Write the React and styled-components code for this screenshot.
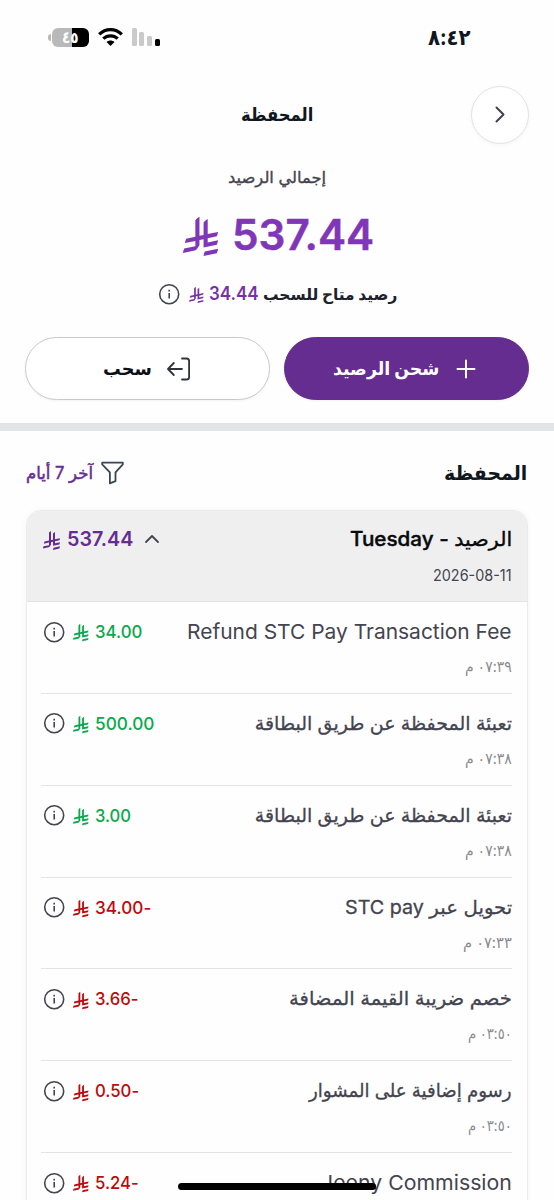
import React, { useLayoutEffect, useRef, useState } from 'react';
import styled, { createGlobalStyle } from 'styled-components';

const GlobalStyle = createGlobalStyle`
    * {
        box-sizing: border-box;
    }
    body {
        margin: 0;
        background: #fefefe;
        font-family: Inter, 'DejaVu Sans', sans-serif;
    }
`

const Screen = styled.div`
    direction: rtl;
    position: relative;
    width: 554px;
    height: 1200px;
    overflow: hidden;
    background: #fefefe;
    color: #101720;
`

const FitBox = styled.span`
    display: block;
    flex: none;
    width: ${p => p.$width}px;
    height: ${p => p.$line || 24}px;
    line-height: ${p => p.$line || 24}px;
    font-size: ${p => p.$size}px;
    font-weight: ${p => p.$weight || 400};
    color: ${p => p.$color || 'inherit'};
    margin-top: ${p => p.$drop || 0}px;
    white-space: nowrap;
`

const FitInner = styled.span`
    display: inline-block;
    transform-origin: 100% 50%;
    -webkit-text-stroke: ${p => p.$stroke || 0}px currentColor;
`

// keeps a label at a fixed width whatever font ends up being used
const Fit = ({ children, width, size, weight, color, line, drop, stroke }) => {
    const ref = useRef(null)
    const [scale, setScale] = useState(1)
    useLayoutEffect(() => {
        setScale(width / ref.current.offsetWidth)
    }, [width])
    return (
        <FitBox $width={width} $size={size} $weight={weight} $color={color} $line={line} $drop={drop}>
            <FitInner ref={ref} $stroke={stroke} style={{ transform: `scaleX(${scale})` }}>{children}</FitInner>
        </FitBox>
    )
}

const Svg = styled.svg`
    display: block;
    flex: none;
    overflow: visible;
`

const Riyal = ({ width, color, drop = 0 }) => (
    <Svg width={width} height={width * 1.118} viewBox={`0 ${-drop * 60} 1124.14 1256.39`} fill={color}>
        <path d="M699.62,1113.02c-20.06,44.48-33.32,92.75-38.4,143.37l424.51-90.24c20.06-44.47,33.31-92.75,38.4-143.37l-424.51,90.24Z" />
        <path d="M1085.73,895.8c20.06-44.47,33.32-92.75,38.4-143.37l-330.68,70.33v-135.2l292.27-62.11c20.06-44.47,33.32-92.75,38.4-143.37l-330.68,70.27V66.13c-50.67,28.45-95.67,66.32-132.25,110.99v403.35l-132.25,28.11V0c-50.67,28.44-95.67,66.32-132.25,110.99v525.69l-295.91,62.88c-20.06,44.47-33.33,92.75-38.42,143.37l334.33-71.05v170.26l-358.3,76.14c-20.06,44.47-33.32,92.75-38.4,143.37l375.04-79.7c30.53-6.35,56.77-24.4,73.83-49.24l68.78-101.97v-.02c7.14-10.55,11.3-23.27,11.3-36.97v-149.98l132.25-28.11v270.4l424.53-90.28Z" />
    </Svg>
)

const Info = () => (
    <Svg width="21" height="21" viewBox="0 0 21 21" fill="none" stroke="#43444f" strokeWidth="1.6">
        <circle cx="10.2" cy="10.2" r="9.5" />
        <path d="M10.2 9v5.4" />
        <path d="M10.2 5.8v1.7" />
    </Svg>
)

const StatusBar = styled.div`
    display: flex;
    justify-content: space-between;
    align-items: center;
    height: 74px;
    padding: 0 83px 0 48px;
`

const StatusIcons = styled.div`
    display: flex;
    align-items: center;
`

const Signal = styled.div`
    direction: ltr;
    display: flex;
    align-items: flex-end;
    gap: 2.7px;
    height: 18px;
`

const Bar = styled.i`
    width: 5px;
    height: ${p => p.$height}px;
    border-radius: 1.5px;
    background: ${p => p.$on ? '#000' : '#cacaca'};
`

const WifiBox = styled.div`
    margin: 0 9px;
`

const BatteryBox = styled.div`
    direction: ltr;
    display: flex;
    align-items: center;
    gap: 1px;
`

const BatteryCap = styled.i`
    width: 2.5px;
    height: 7px;
    border-radius: 3px 0 0 3px;
    background: #b9b9b9;
`

const Battery = styled.div`
    direction: rtl;
    display: flex;
    justify-content: center;
    width: 37px;
    height: 19px;
    border-radius: 6px;
    background: linear-gradient(to left, #000 17px, #b9b9b9 17px);
`

const Header = styled.header`
    display: grid;
    grid-template-columns: 58px 1fr 58px;
    align-items: center;
    justify-items: center;
    height: 81px;
    padding: 0 25px;
`

const RoundButton = styled.button`
    display: flex;
    align-items: center;
    justify-content: center;
    width: 58px;
    height: 58px;
    padding: 0;
    border: 1.5px solid #e3e3e5;
    border-radius: 50%;
    background: #fff;
    box-shadow: 0 1px 5px rgba(0, 0, 0, .04);
`

const Summary = styled.section`
    display: flex;
    flex-direction: column;
    align-items: center;
    height: 182px;
    padding-top: 10px;
`

const TotalRow = styled.div`
    display: flex;
    align-items: center;
    gap: 15px;
    height: 52px;
    margin-top: 20px;
    padding-left: 3px;
`

const AvailableRow = styled.div`
    display: flex;
    align-items: center;
    gap: 5px;
    height: 28px;
    margin-top: 19px;
    padding-left: 2px;
`

const InfoSlot = styled.span`
    margin-right: ${p => p.$gap}px;
`

const Actions = styled.div`
    display: grid;
    grid-template-columns: 1fr 1fr;
    gap: 14px;
    height: 86px;
    padding: 0 25px;
`

const Action = styled.button`
    display: flex;
    align-items: center;
    justify-content: center;
    gap: ${p => p.$gap}px;
    height: 63px;
    padding: 0 ${p => p.$shift}px 0 0;
    border: 1px solid ${p => p.$primary ? '#652d90' : '#c9c8d0'};
    border-radius: 32px;
    background: ${p => p.$primary ? '#652d90' : '#fff'};
    color: ${p => p.$primary ? '#fff' : '#0b0f16'};
    font-family: inherit;
    box-shadow: 0 1px 3px rgba(0, 0, 0, .05);
`

const Divider = styled.div`
    height: 8px;
    background: #e3e4e6;
`

const SectionHead = styled.div`
    display: flex;
    align-items: center;
    justify-content: space-between;
    height: 79px;
    padding: 5px 27px 0 26px;
`

const Filter = styled.div`
    display: flex;
    align-items: center;
    gap: 8px;
`

const Card = styled.section`
    width: 502px;
    height: 720px;
    margin-right: 26px;
    border: 1px solid #ebebed;
    border-radius: 15px 15px 0 0;
    background: #fefefe;
    box-shadow: 0 0 6px rgba(0, 0, 0, .04);
    overflow: hidden;
`

const CardHead = styled.div`
    display: flex;
    justify-content: space-between;
    height: 91px;
    padding: 15px 15px 0 16px;
    background: #efefef;
    border-bottom: 1px solid #e3e3e6;
`

const Balance = styled.div`
    display: flex;
    align-items: center;
    height: 26px;
`

const ChevronSlot = styled.span`
    margin-left: 12px;
`

const RiyalSlot = styled.span`
    margin-right: 7px;
`

const Row = styled.article`
    display: flex;
    justify-content: space-between;
    height: 91.85px;
    margin: 0 15px 0 14px;
    padding: 17px 0 0 3px;
    border-bottom: 1px solid #e4e4e6;
`

const Amount = styled.div`
    display: flex;
    align-items: center;
    height: 26px;
`

const HomeIndicator = styled.div`
    position: absolute;
    left: 178px;
    bottom: 10px;
    width: 198px;
    height: 7px;
    border-radius: 4px;
    background: #000;
`

const GREEN = '#09a94b'
const RED = '#bd0a0c'

const rows = [
    { title: 'Refund STC Pay Transaction Fee', width: 325, latin: true, time: '٠٧:٣٩ م', timeWidth: 47, amount: '34.00', amountWidth: 47, color: GREEN },
    { title: 'تعبئة المحفظة عن طريق البطاقة', width: 257, time: '٠٧:٣٨ م', timeWidth: 47, amount: '500.00', amountWidth: 59, color: GREEN },
    { title: 'تعبئة المحفظة عن طريق البطاقة', width: 257, time: '٠٧:٣٨ م', timeWidth: 47, amount: '3.00', amountWidth: 36, color: GREEN },
    { title: 'تحويل عبر STC pay', width: 167, time: '٠٧:٣٣ م', timeWidth: 49, amount: '-34.00', amountWidth: 56, color: RED },
    { title: 'خصم ضريبة القيمة المضافة', width: 223, time: '٠٣:٥٠ م', timeWidth: 44, amount: '-3.66', amountWidth: 44, color: RED },
    { title: 'رسوم إضافية على المشوار', width: 203, time: '٠٣:٥٠ م', timeWidth: 44, amount: '-0.50', amountWidth: 44, color: RED },
    { title: 'Jeeny Commission', width: 191, latin: true, amount: '-5.24', amountWidth: 44, color: RED },
]

const Transaction = ({ item }) => (
    <Row>
        <div>
            <Fit width={item.width} size={item.latin ? 20.5 : 19} line={26} color="#43444f" stroke={item.latin ? 0 : .3}>{item.title}</Fit>
            {item.time && <Fit width={item.timeWidth} size={15.5} line={22} drop={11} color="#8b8b90">{item.time}</Fit>}
        </div>
        <Amount>
            <Fit width={item.amountWidth} size={17.5} weight={500} line={26} color={item.color}>{item.amount}</Fit>
            <RiyalSlot><Riyal width={15.5} color={item.color} drop={1} /></RiyalSlot>
            <InfoSlot $gap={7.5}><Info /></InfoSlot>
        </Amount>
    </Row>
)

export default () => (
    <Screen>
        <GlobalStyle />
        <StatusBar>
            <Fit width={43} size={22} weight={700} line={24}>٨:٤٢</Fit>
            <StatusIcons>
                <Signal>
                    <Bar $height={18} />
                    <Bar $height={14} />
                    <Bar $height={10} />
                    <Bar $height={7} $on />
                </Signal>
                <WifiBox>
                    <Svg width="25" height="18" viewBox="0 0 25 18" fill="none" stroke="#000" strokeWidth="3.2">
                        <path d="M1.2 6.4C7.6.1 17.4.1 23.8 6.4" />
                        <path d="M5.3 10.7c4.1-3.9 10.3-3.9 14.4 0" />
                        <path d="M12.5 18l-4-4c2.3-2 5.7-2 8 0z" fill="#000" stroke="none" />
                    </Svg>
                </WifiBox>
                <BatteryBox>
                    <BatteryCap />
                    <Battery>
                        <Fit width={17} size={16} weight={700} line={18} color="#fff">٤٥</Fit>
                    </Battery>
                </BatteryBox>
            </StatusIcons>
        </StatusBar>

        <Header>
            <RoundButton>
                <Svg width="10" height="17" viewBox="0 0 10 17" fill="none" stroke="#41424f" strokeWidth="2" strokeLinecap="round" strokeLinejoin="round">
                    <path d="M1.5 1.5l7 7-7 7" />
                </Svg>
            </RoundButton>
            <Fit width={72} size={18} weight={700} line={26}>المحفظة</Fit>
        </Header>

        <Summary>
            <Fit width={98} size={16} line={24} color="#43444f" stroke={.35}>إجمالي الرصيد</Fit>
            <TotalRow>
                <Fit width={142} size={42.5} weight={600} line={50} color="#8036b8" stroke={.5}>537.44</Fit>
                <Riyal width={35} color="#8036b8" drop={1} />
            </TotalRow>
            <AvailableRow>
                <Fit width={134} size={16} weight={700} line={26} color="#1d212c">رصيد متاح للسحب</Fit>
                <Fit width={50} size={18} weight={600} line={26} color="#7632a5">34.44</Fit>
                <Riyal width={14.5} color="#7632a5" drop={1} />
                <InfoSlot $gap={4}><Info /></InfoSlot>
            </AvailableRow>
        </Summary>

        <Actions>
            <Action $primary $gap={18} $shift={5}>
                <Svg width="18" height="18" viewBox="0 0 18 18" fill="none" stroke="#fff" strokeWidth="2" strokeLinecap="round">
                    <path d="M9 .5v17M.5 9h17" />
                </Svg>
                <Fit width={106} size={18} weight={700} line={26}>شحن الرصيد</Fit>
            </Action>
            <Action $gap={15} $shift={3}>
                <Svg width="23" height="22" viewBox="0 0 23 22" fill="none" stroke="#30323c" strokeWidth="1.8" strokeLinecap="round" strokeLinejoin="round">
                    <path d="M15 .5h4.5a2.6 2.6 0 0 1 2.6 2.6v15.8a2.6 2.6 0 0 1-2.6 2.6H15" />
                    <path d="M15 11H1M6.8 5L1 11l5.8 6" />
                </Svg>
                <Fit width={49} size={18} weight={700} line={26}>سحب</Fit>
            </Action>
        </Actions>

        <Divider />

        <SectionHead>
            <Fit width={83} size={20} weight={700} line={28}>المحفظة</Fit>
            <Filter>
                <Svg width="23" height="22" viewBox="0 0 23 22" fill="none" stroke="#3d4552" strokeWidth="1.8" strokeLinejoin="round">
                    <path d="M1.2.6h20.6v1.8l-7.3 8v8.8l-5.6 2.2v-11L1.2 2.4z" />
                </Svg>
                <Fit width={67} size={17} line={26} color="#652d90" stroke={.5}>آخر 7 أيام</Fit>
            </Filter>
        </SectionHead>

        <Card>
            <CardHead>
                <div>
                    <Fit width={162} size={19.5} weight={500} line={26} color="#08090c" stroke={.4}>الرصيد - Tuesday</Fit>
                    <Fit width={79} size={15.5} line={22} drop={13} color="#43444f"><bdi>2026-08-11</bdi></Fit>
                </div>
                <Balance>
                    <ChevronSlot>
                        <Svg width="14" height="8" viewBox="0 0 14 8" fill="none" stroke="#43444f" strokeWidth="1.8" strokeLinecap="round" strokeLinejoin="round">
                            <path d="M1 7l6-6 6 6" />
                        </Svg>
                    </ChevronSlot>
                    <Fit width={66} size={20} weight={600} line={26} color="#652d90">537.44</Fit>
                    <RiyalSlot><Riyal width={17} color="#652d90" drop={1} /></RiyalSlot>
                </Balance>
            </CardHead>
            {rows.map((item, i) => <Transaction key={i} item={item} />)}
        </Card>
        <HomeIndicator />
    </Screen>
)
